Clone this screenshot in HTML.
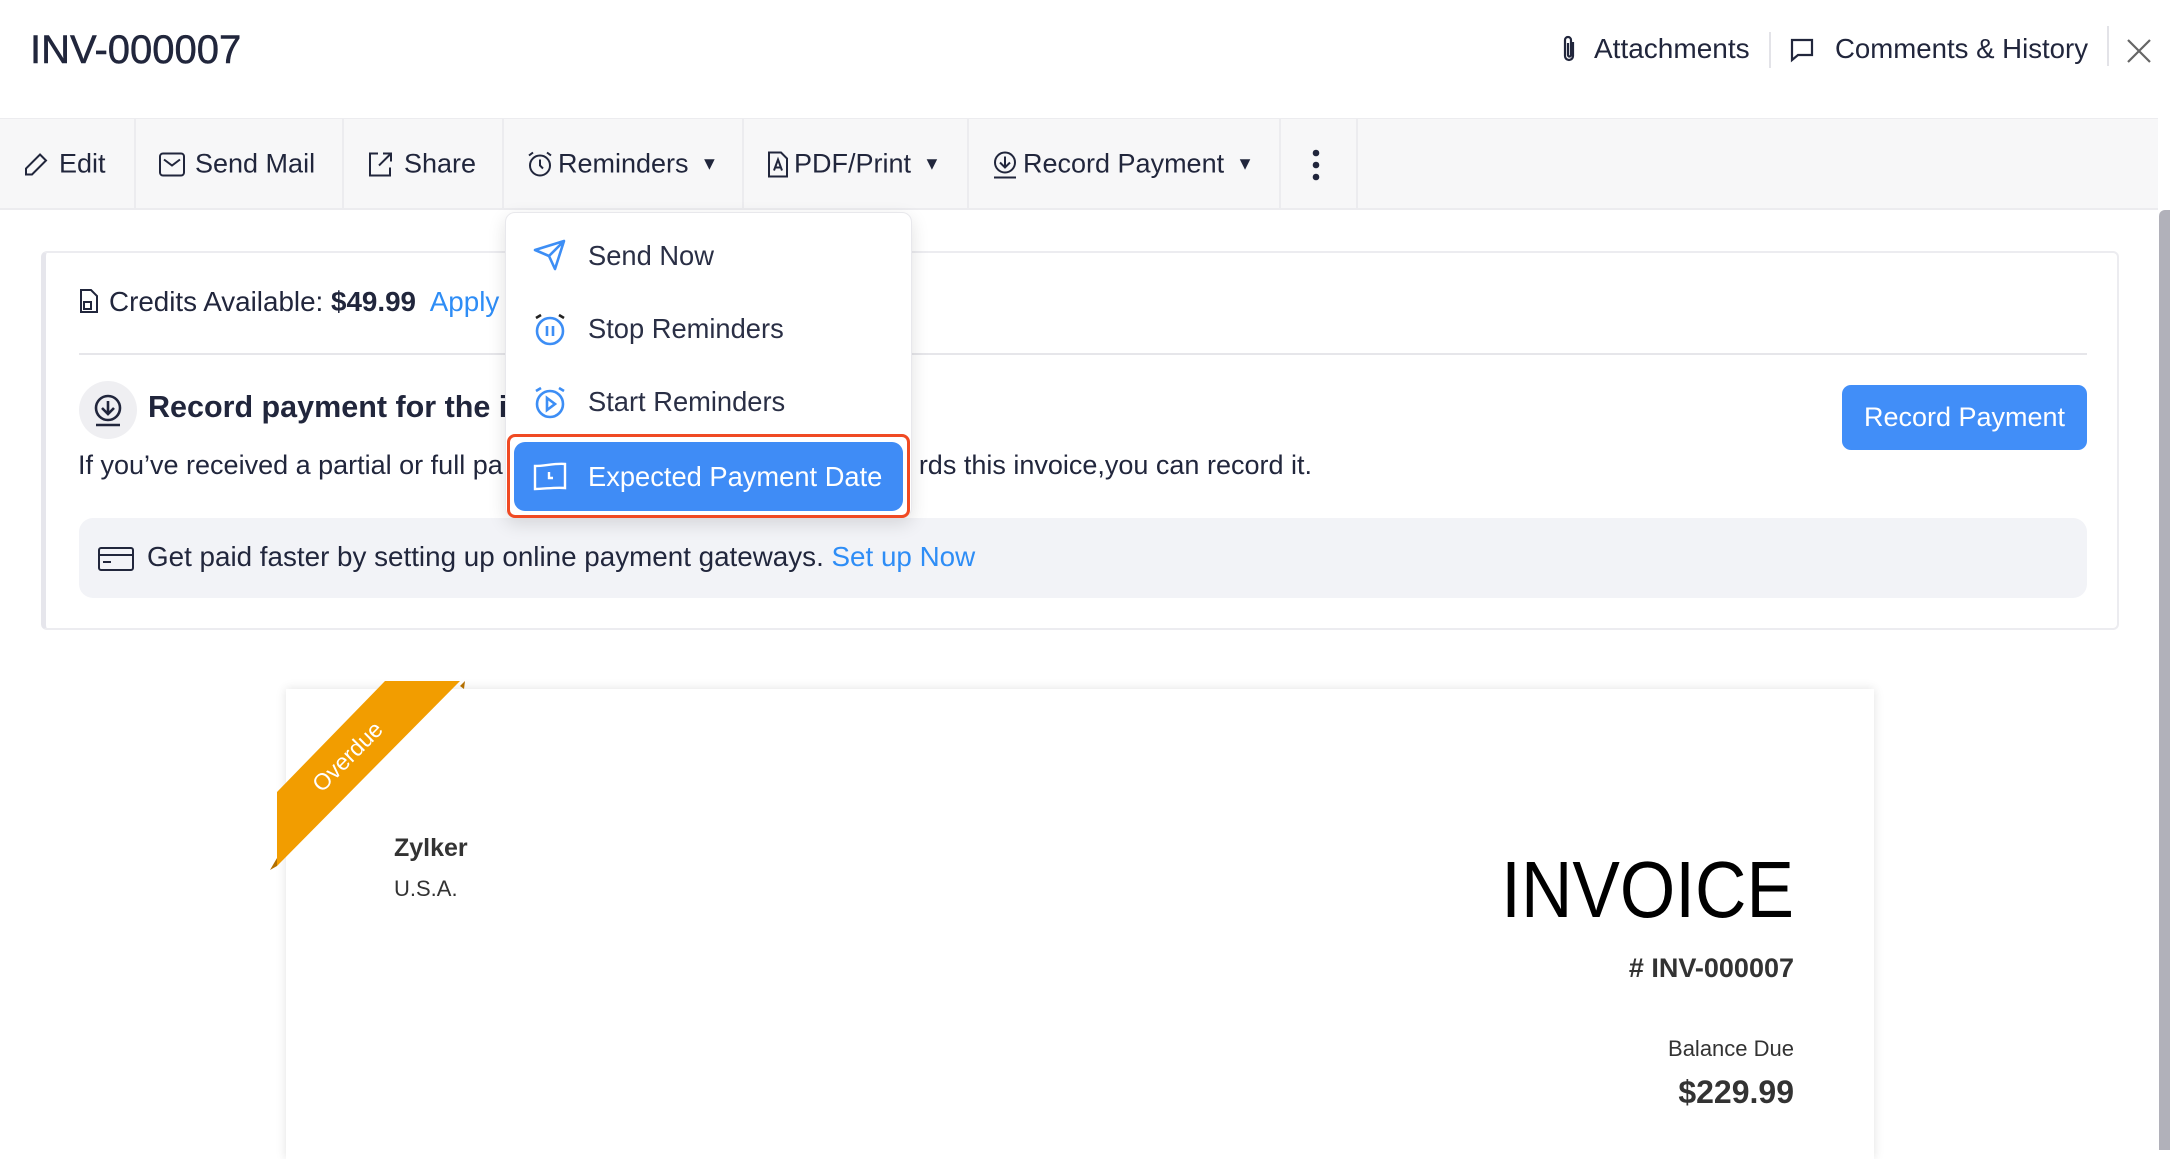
<!DOCTYPE html>
<html><head><meta charset="utf-8"><style>
*{margin:0;padding:0;box-sizing:border-box}
body{width:2170px;height:1148px;overflow:hidden;background:#fff;font-family:"Liberation Sans",sans-serif;color:#21263c;position:relative}
.a{position:absolute;white-space:nowrap}
.tb{position:absolute;top:118px;left:0;width:2158px;height:92px;background:#f7f7f8;border-top:1px solid #ececef;border-bottom:2px solid #ececef}
.sep{position:absolute;top:0;width:2px;height:90px;background:#ececef}
.ti{position:absolute;top:45px;transform:translateY(-50%);font-size:27px;color:#21263c;display:flex;align-items:center;gap:10px}
.ti svg{flex:none}
.caret{font-size:18px;margin-left:8px}
.dd{position:absolute;left:505px;top:212px;width:407px;height:306px;background:#fff;border:1px solid #e8e8ec;border-radius:10px;box-shadow:0 6px 18px rgba(0,0,0,.12)}
.mi{position:absolute;left:588px;font-size:27.3px;color:#2a2f45;transform:translateY(-50%)}
</style></head><body>
<div class="a" style="left:30px;top:28px;font-size:40px;color:#21263c;-webkit-text-stroke:0.5px #21263c">INV-000007</div>

<svg class="a" style="left:1562px;top:34px" width="16" height="30" viewBox="0 0 16 30" fill="none" stroke="#21263c" stroke-width="2.2"><path d="M11 8v14a4 4 0 0 1-8 0V6a3 3 0 0 1 6 0v15a1.5 1.5 0 0 1-3 0V9"/></svg>
<div class="a" style="left:1594px;top:33px;font-size:28px">Attachments</div>
<div class="a" style="left:1769px;top:32px;width:2px;height:36px;background:#e3e3e8"></div>
<svg class="a" style="left:1789px;top:37px" width="26" height="26" viewBox="0 0 26 26" fill="none" stroke="#21263c" stroke-width="2.2"><path d="M3 3h20v15H9l-6 5z"/></svg>
<div class="a" style="left:1835px;top:33px;font-size:27.6px">Comments &amp; History</div>
<div class="a" style="left:2107px;top:26px;width:2px;height:40px;background:#e3e3e8"></div>
<svg class="a" style="left:2126px;top:38px" width="26" height="26" viewBox="0 0 26 26" stroke="#666" stroke-width="2.2"><path d="M2 2l22 22M24 2L2 24"/></svg>

<div class="tb">
 <div class="sep" style="left:134px"></div><div class="sep" style="left:342px"></div><div class="sep" style="left:502px"></div><div class="sep" style="left:742px"></div><div class="sep" style="left:967px"></div><div class="sep" style="left:1279px"></div><div class="sep" style="left:1356px"></div>
 <div class="ti" style="left:23px"><svg width="26" height="26" viewBox="0 0 26 26" fill="none" stroke="#21263c" stroke-width="2"><path d="M17 3l6 6L9 23H3v-6z"/></svg>Edit</div>
 <div class="ti" style="left:159px"><svg width="26" height="24" viewBox="0 0 26 24" fill="none" stroke="#21263c" stroke-width="2"><rect x="1" y="1" width="24" height="22" rx="3"/><path d="M5 7l8 6 8-6"/></svg>Send Mail</div>
 <div class="ti" style="left:366px"><svg width="28" height="28" viewBox="0 0 28 28" fill="none" stroke="#21263c" stroke-width="2"><path d="M12 3H4v22h20v-8M17 3h8v8M25 3L13 15"/></svg>Share</div>
 <div class="ti" style="left:526px;gap:4px"><svg width="28" height="28" viewBox="0 0 28 28" fill="none" stroke="#21263c" stroke-width="2"><circle cx="14" cy="15" r="10"/><path d="M14 9v6l3 3M3 5l4-3M25 5l-4-3"/></svg>Reminders<span class="caret">▼</span></div>
 <div class="ti" style="left:766px;gap:4px"><svg width="24" height="28" viewBox="0 0 24 28" fill="none" stroke="#21263c" stroke-width="2"><path d="M3 2h12l6 6v18H3z"/><path d="M8 20l4-11 4 11M9 17h6"/></svg>PDF/Print<span class="caret">▼</span></div>
 <div class="ti" style="left:991px;gap:4px"><svg width="28" height="30" viewBox="0 0 28 30" fill="none" stroke="#21263c" stroke-width="2"><circle cx="14" cy="13" r="10"/><path d="M14 7v11M9 13l5 5 5-5M3 28h22"/></svg>Record Payment<span class="caret">▼</span></div>
 <svg class="a" style="left:1312px;top:30px" width="8" height="32" viewBox="0 0 8 32" fill="#21263c"><circle cx="4" cy="4" r="3.3"/><circle cx="4" cy="16" r="3.3"/><circle cx="4" cy="28" r="3.3"/></svg>
</div>

<div class="a" style="left:2159px;top:210px;width:11px;height:940px;background:#b1b1ba;border-radius:6px 0 0 0"></div>

<div class="a" style="left:41px;top:251px;width:2078px;height:379px;border:2px solid #ececf0;border-left:5px solid #e6e6ec;border-radius:6px"></div>
<svg class="a" style="left:79px;top:288px" width="20" height="26" viewBox="0 0 20 26" fill="none" stroke="#21263c" stroke-width="2"><path d="M2 2h10l6 6v16H2z"/><rect x="5" y="14" width="7" height="7"/></svg>
<div class="a" style="left:109px;top:286px;font-size:27.8px">Credits Available: <b>$49.99</b> <span style="color:#2e8df6;margin-left:6px">Apply</span></div>
<div class="a" style="left:79px;top:353px;width:2008px;height:2px;background:#e6e6ea"></div>
<div class="a" style="left:79px;top:381px;width:58px;height:58px;border-radius:50%;background:#efeff2"></div>
<svg class="a" style="left:90px;top:392px" width="36" height="36" viewBox="0 0 36 36" fill="none" stroke="#21263c" stroke-width="2.6"><circle cx="18" cy="16" r="12"/><path d="M18 9v13M12 16l6 6 6-6M6 33h24"/></svg>
<div class="a" style="left:148px;top:390px;font-size:30.5px;font-weight:bold">Record payment for the i</div>
<div class="a" style="left:78px;top:450px;font-size:27px">If you’ve received a partial or full pa</div>
<div class="a" style="right:858px;top:450px;font-size:27px">rds this invoice,you can record it.</div>
<div class="a" style="left:1842px;top:385px;width:245px;height:65px;background:#418ef8;border-radius:9px;color:#fff;font-size:27px;text-align:center;line-height:65px">Record Payment</div>
<div class="a" style="left:79px;top:518px;width:2008px;height:80px;background:#f2f3f7;border-radius:14px"></div>
<svg class="a" style="left:98px;top:547px" width="36" height="24" viewBox="0 0 36 24" fill="none" stroke="#21263c" stroke-width="2"><rect x="1" y="1" width="34" height="22" rx="2"/><path d="M1 8h34M5 15h8"/></svg>
<div class="a" style="left:147px;top:541px;font-size:27.8px">Get paid faster by setting up online payment gateways. <span style="color:#2e8df6">Set up Now</span></div>

<div class="a" style="left:286px;top:689px;width:1588px;height:470px;background:#fff;box-shadow:0 0 10px rgba(0,0,0,.12)"></div>
<svg class="a" style="left:270px;top:676px" width="200" height="200" viewBox="270 676 200 200"><polygon points="460,686 465,681 464,689" fill="#b36f00"/><polygon points="385,681 460,681 277,866 277,792" fill="#f29d00"/><polygon points="277,866 270,870 277,858" fill="#b36f00"/><text x="0" y="0" transform="translate(353,762) rotate(-45)" font-family="Liberation Sans" font-size="23" fill="#fff" text-anchor="middle">Overdue</text></svg>
<div class="a" style="left:394px;top:834px;font-size:25px;font-weight:bold;color:#333">Zylker</div>
<div class="a" style="left:394px;top:876px;font-size:22px;color:#333">U.S.A.</div>
<div class="a" style="right:376px;top:844px;font-size:80px;color:#000;transform:scaleX(0.89);transform-origin:right center">INVOICE</div>
<div class="a" style="right:376px;top:953px;font-size:27px;font-weight:bold;color:#333">#&nbsp;INV-000007</div>
<div class="a" style="right:376px;top:1036px;font-size:22px;color:#333">Balance Due</div>
<div class="a" style="right:376px;top:1074px;font-size:32px;font-weight:bold;color:#333">$229.99</div>

<div class="dd"></div>
<svg class="a" style="left:533px;top:238px" width="34" height="34" viewBox="0 0 34 34" fill="none" stroke="#3d8ef5" stroke-width="2.6" stroke-linejoin="round"><path d="M2 12L31 3 22 31 16 18z M16 18L31 3"/></svg>
<div class="mi" style="top:256px">Send Now</div>
<svg class="a" style="left:533px;top:312px" width="34" height="34" viewBox="0 0 34 34" fill="none" stroke="#3d8ef5" stroke-width="2.6"><circle cx="17" cy="19" r="13"/><path d="M14 14v10M20 14v10"/><path d="M3 6l5-3M31 6l-5-3" stroke="#222"/></svg>
<div class="mi" style="top:329px">Stop Reminders</div>
<svg class="a" style="left:533px;top:385px" width="34" height="34" viewBox="0 0 34 34" fill="none" stroke="#3d8ef5" stroke-width="2.6"><circle cx="17" cy="19" r="13"/><path d="M14 13l8 6-8 6z"/><path d="M3 6l5-3M31 6l-5-3"/></svg>
<div class="mi" style="top:402px">Start Reminders</div>
<div class="a" style="left:507px;top:434px;width:403px;height:84px;border:3px solid #f04a23;border-radius:8px"></div>
<div class="a" style="left:514px;top:442px;width:389px;height:69px;background:#3f8cf6;border-radius:11px"></div>
<svg class="a" style="left:533px;top:461px" width="34" height="30" viewBox="0 0 34 30" fill="none" stroke="#fff" stroke-width="2.4"><path d="M2 5c10 0 20-3 30-2v24c-10-1-20 1-30 1z"/><path d="M16 11v6h4"/></svg>
<div class="mi" style="top:477px;color:#fff">Expected Payment Date</div>
</body></html>
